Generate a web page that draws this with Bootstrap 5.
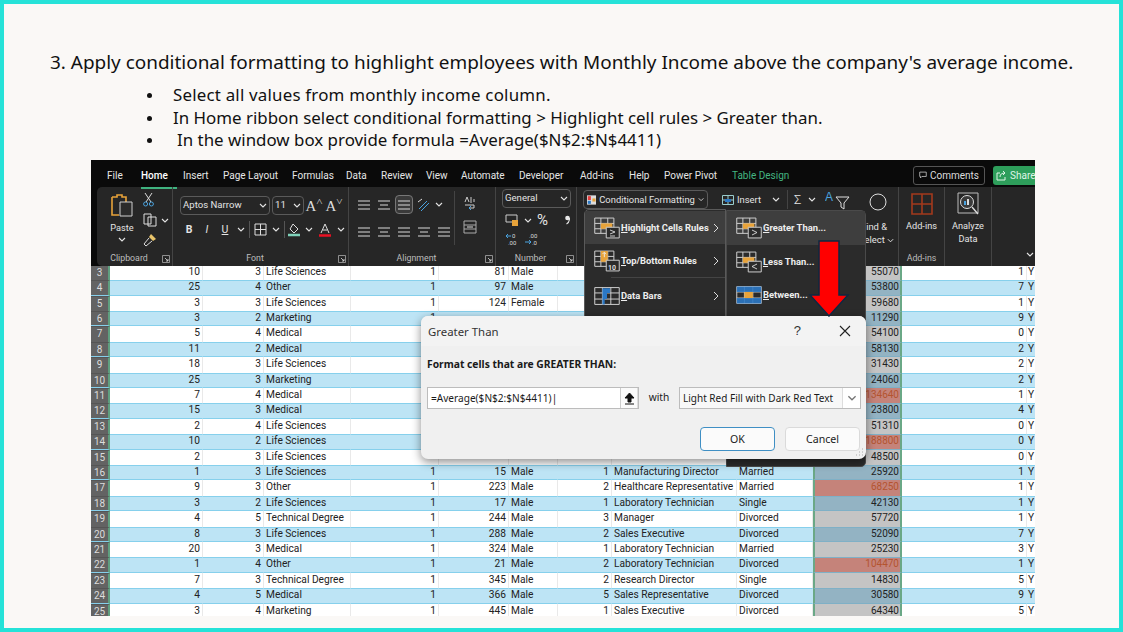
<!DOCTYPE html>
<html lang="en"><head><meta charset="utf-8"><title>Conditional formatting</title>
<link href="https://cdn.jsdelivr.net/npm/bootstrap@5.3.0/dist/css/bootstrap.min.css" rel="stylesheet">
<style>
html,body{height:632px;overflow:hidden;margin:0}
.slide{height:632px;border:4px solid #25e2d8;background:#faf8f6;padding:43px 0 0 46px;color:#111;font-family:"Noto Sans",sans-serif;overflow:hidden}
.slide-title{font-size:18.95px;line-height:30px;margin:0;white-space:nowrap}
.steps{margin:7px 0 0;padding:0 0 0 123px;font-size:16.9px;line-height:22.7px;white-space:nowrap;list-style:none}
.steps li{position:relative}
.steps li::before{content:"";position:absolute;left:-26px;top:9px;width:5px;height:5px;border-radius:50%;background:#111}
.steps .gap1{padding-left:4px}
.steps .wide1{letter-spacing:.2px}
.xl{position:relative;width:944px;height:456px;margin:8px 0 0 41px;overflow:hidden;background:#0a0a0a;font-family:"Liberation Sans Narrow",Roboto,sans-serif;font-size:10px;color:#e8e8e8}
.tabs{height:27px;padding:3px 0 0 16px;gap:0;font-family:Roboto,sans-serif;font-size:10px;color:#e6e6e6}
.tabs>span{position:relative;flex:none}
.t1{width:34px}.t2{width:42px}.t3{width:40px}.t4{width:69px}.t5{width:54px}.t6{width:35px}.t7{width:45px}.t8{width:35px}.t9{width:58px}.t10{width:61px}.t11{width:49px}.t12{width:35px}.t13{width:68px}
.tab-on{font-weight:500;color:#fff}
.tab-on::after{content:"";position:absolute;left:0;right:6px;bottom:-6px;height:2px;background:#3fb27f}
.tab-green{color:#43b581}
.tabs-right{margin-left:auto;gap:8px;margin-right:-6px}
.cmt{height:19px;border:1px solid #555;border-radius:3px;padding:0 5px;gap:3px;color:#ddd;width:72px}
.shr{height:19px;background:#2e9e5b;border-radius:3px;padding:0 3px;gap:3px;color:#dff5e7;width:48px}
.ribbon{height:79px;margin-left:6px;width:950px;background:#262626;border-radius:5px 0 0 5px;color:#e4e4e4;font-family:Roboto,sans-serif;font-size:9.2px}
.rg{position:relative;flex:none;height:79px;border-right:1px solid #444;display:flex;flex-direction:column}
.rg-body{flex:1 1 auto;min-height:0;display:flex}
.rg-label{height:15px;line-height:15px;text-align:center;color:#bdbdbd;font-size:8.8px;position:relative;flex:none}
.lab-l{padding-right:11px}
.launch{position:absolute;right:2px;top:4px}
.g-clip{width:76px}.g-font{width:176px}.g-align{width:147px}.g-num{width:81px}.g-styles{width:322px}.g-add{width:46px}.g-an{width:47px}
.g-end{width:42px;flex:none;padding:0 0 9px 0}
.paste{width:45px;padding:6px 0 0 5px;text-align:center;line-height:11px}
.paste svg{display:block;margin:0 auto 4px}
.cliptools{gap:6px;padding:5px 0 0 1px}
.f-col{padding:9px 0 0 7px;gap:5px}
.ctl{height:19px;border:1px solid #5a5a5a;border-radius:4px;padding:0 2px 0 2px;font-size:9.6px;justify-content:space-between}
.c-font{width:90px}.c-size{width:32px;margin-left:2px}
.gly{color:#ddd;font-family:"Liberation Serif",serif;font-size:15px;line-height:16px;width:20px;text-align:center;flex:none}
.f-row2{gap:0;padding-left:0;height:19px}
.ti{display:flex;justify-content:center;align-items:center;flex:none;font-size:10.5px}
.w18{width:18px}.w14{width:14px}.w16{width:16px}
.sepv{width:1px;height:17px;background:#555;flex:none;margin:0 1px}
.a-col{padding:8px 0 0 6px;gap:8px}
.a-row{gap:2px}
.ibox{width:18px;height:19px;display:flex;align-items:center;justify-content:center;border-radius:4px}
.ibox-on{border:1px solid #777;background:#3a3a3a}
.a-side{margin-left:1px;padding:5px 0 0 8px;border-left:1px solid #444;gap:9px;height:54px;margin-top:4px}
.n-col{padding:2px 0 0 6px;gap:4px}
.c-gen{width:69px}
.n-row{gap:5px;padding-left:3px}
.pct{font-size:15px;line-height:16px}
.cm{margin-left:12px}
.s-row{padding:3px 0 0 6px;font-size:9.4px}
.cf{width:125px;height:19px;border:1px solid #5a5a5a;border-radius:4px;padding:0 3px;gap:3px}
.ins{width:66px;margin-left:14px;gap:3px;height:19px;border-right:1px solid #444}
.sig{width:37px;gap:7px;height:19px;padding-left:6px;font-size:13px;font-weight:300}
.find{margin-left:8px;margin-top:3px;width:30px;text-align:center;line-height:13px;flex:none;white-space:nowrap}
.find svg.lens{display:block;margin:0 0 5px 8px}
.stack{text-align:center;line-height:13px;width:100%;padding-top:5px}
.stack svg{display:block;margin:0 auto 3px}
.sheet{height:350px;overflow:hidden;background:#fff;color:#222;font-size:10.2px}
.sheet-in{margin-top:-1.4px}
.xr{display:grid;grid-template-columns:19px 93px 61px 87px 88px 70px 49px 54px 125px 76px 89px 125px 8px;height:15.41px;line-height:14px}
.xr>span{padding:0 2px;overflow:hidden;white-space:nowrap;border-right:1px solid #e9e9e9;box-sizing:border-box}
.xb>span{background:#bde4f5;border-top:1px solid #86d0ec;border-bottom:1px solid #86d0ec;line-height:12.6px;border-right-color:#bde4f5}
.xr>.rh{background:#636363;color:#ddd;text-align:center;border-right:2px solid #5f9f7f;border-top:1px solid #555;padding:0;line-height:13px;font-size:10px}
.xr>.re{text-align:right}
.xr>.inc{text-align:right;background:#c4c4c4;border-left:2px solid #6aa886;border-right:2px solid #6aa886;font-size:10px;padding-right:1px}
.xb>.inc{background:#93b3c3;border-top-color:#7fb0c6;border-bottom-color:#7fb0c6}
.xr>.hi{background:#c5837a;color:#b4542f}
.xr>.yc{padding-left:1px;border-right:0}
.menu{position:absolute;left:493px;top:49px;width:142px;height:200px;padding-top:1px;background:#2b2b2b;border:1px solid #5a5a5a;border-radius:5px 0 0 0;font-family:Roboto,sans-serif;font-size:9.4px;font-weight:700;color:#eee}
.submenu{position:absolute;left:635px;top:50px;width:140px;height:257px;background:#2b2b2b;border:1px solid #4a4a4a;border-radius:0 5px 5px 0;font-family:Roboto,sans-serif;font-size:9.4px;font-weight:700;color:#eee}
.mi{height:33px;padding-left:9px;gap:1px;position:relative}
.mi svg{flex:none}
.mi-on{background:#3e3e3e}
.mi u{text-underline-offset:1px}
.mi-tall{height:35px}
.submenu .mi-tall{height:34px}
.line-top{border-bottom:1px solid #444;margin-left:26px;height:0}
.mi-arrow{position:absolute;right:6px;top:50%;transform:translateY(-50%)}
.red-arrow{position:absolute;left:717px;top:80px;z-index:5}
.dlg{position:absolute;left:330px;top:156px;width:445px;height:143px;z-index:4;background:#f0f0f0;border:0;border-radius:7px;box-shadow:0 3px 10px rgba(0,0,0,.45);color:#1a1a1a;font-family:"Noto Sans",sans-serif;overflow:hidden}
.dlg-head{height:30px;background:#f3f3f3;padding:0 15px 0 7px;font-size:11.4px;color:#333}
.dlg-q{margin-left:auto;margin-right:38px;font-size:13px;font-family:"Liberation Sans",sans-serif}
.dlg-body{padding:10px 5px 0 6px}
.dlg-lab{font-weight:700;font-size:10.3px;line-height:16px;white-space:nowrap}
.dlg-row{margin-top:15px;gap:0}
.fx{width:212px;height:22px;background:#fff;border:1px solid #bcbcbc;padding:0 0 0 3px;font-size:10.1px;justify-content:space-between}
.fx-btn{width:18px;height:20px;background:#fafafa;border-left:1px solid #ccc;border-right:1px solid #ddd;display:flex;align-items:center;justify-content:center}
.wtxt{width:40px;text-align:center;font-size:10.2px}
.sel{width:182px;height:22px;background:#f8f8f8;border:1px solid #bcbcbc;padding:0 0 0 3px;font-size:10px;justify-content:space-between;white-space:nowrap}
.sel-btn{width:18px;height:20px;background:#fff;border-left:1px solid #ddd;display:flex;align-items:center;justify-content:center}
.dlg-btns{margin-top:18px;gap:10px;padding-right:1px}
.btn.dbtn{width:75px;height:24px;padding:0;font-size:10.6px;line-height:22px;background:#fbfbfb;border:1px solid #dadada;border-radius:4px;color:#1a1a1a;--bs-btn-font-size:10.6px}
.btn.dbtn-ok{border:1px solid #3f8fc4}
.grip{position:absolute;right:2px;bottom:2px}
</style></head><body>
<svg width="0" height="0" class="d-none"><defs>
<symbol id="ic-grid" viewBox="0 0 34 28"><path d="M1 1h25v20H1z" fill="none" stroke="#cfcfcf" stroke-width="1.300"/><path d="M1 8h25M1 15h25M9 1v20M18 1v20" stroke="#cfcfcf" stroke-width="1.300"/><path d="M9 8h15v7H9z" fill="#e8a33a"/><path d="M16 13h17v14H16z" fill="#2b2b2b" stroke="#cfcfcf" stroke-width="1.300"/></symbol>
<symbol id="ic-top" viewBox="0 0 34 28"><path d="M1 1h25v20H1z" fill="none" stroke="#cfcfcf" stroke-width="1.300"/><path d="M1 8h25M1 15h25M9 1v20M18 1v20" stroke="#cfcfcf" stroke-width="1.300"/><path d="M9 1h9v14H9z" fill="#e8a33a"/><path d="M13.500 9V3M11 5l2.500-2.500L16 5" fill="none" stroke="#eee" stroke-width="1.200"/><path d="M16 13h17v14H16z" fill="#2b2b2b" stroke="#cfcfcf" stroke-width="1.300"/></symbol>
<symbol id="ic-bars" viewBox="0 0 34 28"><path d="M1 3h32v22H1z" fill="none" stroke="#cfcfcf" stroke-width="1.300"/><path d="M1 10h32M1 18h32M11 3v22M22 3v22" stroke="#cfcfcf" stroke-width="1.300"/><path d="M11 4h10v6H11zM11 10h6v8h-6zM11 18h3v7h-3z" fill="#2b78c5"/></symbol>
<symbol id="ic-btw" viewBox="0 0 34 28"><path d="M1 3h32v22H1z" fill="none" stroke="#cfcfcf" stroke-width="1.300"/><path d="M1 10h32M1 18h32M11 3v22M22 3v22" stroke="#cfcfcf" stroke-width="1.300"/><path d="M1 3h32v7H1zM1 18h32v7H1z" fill="#2b78c5" opacity=".9"/><path d="M11 10h11v8H11z" fill="#e8a33a"/></symbol>
<symbol id="ic-chev" viewBox="0 0 8 5"><path d="M1 1l3 3 3-3" fill="none" stroke="currentColor" stroke-width="1.100"/></symbol>
<symbol id="ic-lines" viewBox="0 0 14 12"><path d="M1 2h12M1 6h12M1 10h12" stroke="#d8d8d8" stroke-width="1"/></symbol>
<symbol id="ic-linesm" viewBox="0 0 14 12"><path d="M1 2h12M3 6h8M1 10h12" stroke="#d8d8d8" stroke-width="1"/></symbol>
<symbol id="ic-launch" viewBox="0 0 8 8"><path d="M.5.5h7v7h-7z" fill="none" stroke="#aaa" stroke-width=".8"/><path d="M3 3l3 3M6 4v2H4" fill="none" stroke="#ddd" stroke-width=".8"/></symbol>
</defs></svg>
<div class="slide">
<p class="slide-title">3. Apply conditional formatting to highlight employees with Monthly Income above the company's average income.</p>
<ul class="steps">
<li class="wide1">Select all values from monthly income column.</li>
<li>In Home ribbon select conditional formatting &gt; Highlight cell rules &gt; Greater than.</li>
<li class="gap1">In the window box provide formula =Average($N$2:$N$4411)</li>
</ul>
<div class="xl">
<div class="tabs d-flex align-items-center">
<span class="t1">File</span><span class="t2 tab-on">Home</span><span class="t3">Insert</span><span class="t4">Page Layout</span><span class="t5">Formulas</span><span class="t6">Data</span><span class="t7">Review</span><span class="t8">View</span><span class="t9">Automate</span><span class="t10">Developer</span><span class="t11">Add-ins</span><span class="t12">Help</span><span class="t13">Power Pivot</span><span class="tab-green">Table Design</span>
<div class="tabs-right d-flex align-items-center">
<div class="cmt d-flex align-items-center"><svg width="11" height="10" viewBox="0 0 11 10"><path d="M1 1h9v6H4L2 9V7H1z" fill="none" stroke="#ddd"/></svg>Comments</div>
<div class="shr d-flex align-items-center"><svg width="11" height="11" viewBox="0 0 11 11"><path d="M4 3H1v7h8V7M4 7c0-3 2-4 5-4M7 1l2 2-2 2" fill="none" stroke="#dff5e7"/></svg>Share</div>
</div></div>

<div class="ribbon d-flex">
<div class="rg g-clip">
 <div class="rg-body">
  <div class="paste"><svg width="24" height="25" viewBox="0 0 24 25"><path d="M2 4h5V2h5v2h4v5" fill="none" stroke="#e8a33a" stroke-width="1.600"/><path d="M2 4v18h7" fill="none" stroke="#e8a33a" stroke-width="1.600"/><path d="M10 9h12v14H10z" fill="#2b2b2b" stroke="#cfcfcf"/></svg>Paste<svg width="8" height="5" class="mt-1"><use href="#ic-chev"/></svg></div>
  <div class="cliptools d-flex flex-column">
   <svg width="11" height="15" viewBox="0 0 11 15"><path d="M2 1l6 9M9 1L3 10" stroke="#ddd"/><circle cx="2.600" cy="12" r="2" fill="none" stroke="#4aa3df"/><circle cx="8.400" cy="12" r="2" fill="none" stroke="#4aa3df"/></svg>
   <div class="d-flex align-items-center gap-1"><svg width="14" height="14" viewBox="0 0 14 14"><path d="M1 1h7v10H1zM5 4h8v9H5z" fill="#262626" stroke="#ddd"/></svg><svg width="8" height="5"><use href="#ic-chev"/></svg></div>
   <svg width="14" height="14" viewBox="0 0 14 14"><path d="M8 1l5 5-3 2-4-4z" fill="#e8c36a"/><path d="M6 5L1 11l2 2 6-5" fill="none" stroke="#ddd"/></svg>
  </div>
 </div>
 <div class="rg-label lab-l">Clipboard<svg class="launch" width="8" height="8"><use href="#ic-launch"/></svg></div>
</div>
<div class="rg g-font">
 <div class="rg-body">
  <div class="f-col d-flex flex-column">
   <div class="d-flex align-items-center">
    <div class="ctl c-font d-flex align-items-center">Aptos Narrow<svg width="8" height="5"><use href="#ic-chev"/></svg></div>
    <div class="ctl c-size d-flex align-items-center">11<svg width="8" height="5"><use href="#ic-chev"/></svg></div>
    <span class="gly">A<sup>˄</sup></span><span class="gly">A<sup>˅</sup></span>
   </div>
   <div class="f-row2 d-flex align-items-center">
    <span class="ti w18 fw-bold">B</span><span class="ti w18 fst-italic">I</span><span class="ti w18 text-decoration-underline">U</span><span class="ti w14"><svg width="8" height="5"><use href="#ic-chev"/></svg></span><span class="sepv"></span>
    <span class="ti w18"><svg width="13" height="13" viewBox="0 0 13 13"><path d="M1 1h11v11H1zM6.500 1v11M1 6.500h11" fill="none" stroke="#ddd"/></svg></span><span class="ti w14"><svg width="8" height="5"><use href="#ic-chev"/></svg></span><span class="sepv"></span>
    <span class="ti w16"><svg width="14" height="14" viewBox="0 0 14 14"><path d="M6 1l5 5-4 4-4-4z" fill="none" stroke="#ddd"/><path d="M1 12h12" stroke="#7fd1b9" stroke-width="2.500"/></svg></span><span class="ti w14"><svg width="8" height="5"><use href="#ic-chev"/></svg></span>
    <span class="ti w18"><svg width="14" height="14" viewBox="0 0 14 14"><path d="M3 10l4-9 4 9M5 7h4" fill="none" stroke="#ddd"/><path d="M1 12.500h12" stroke="#e81123" stroke-width="2.500"/></svg></span><span class="ti w14"><svg width="8" height="5"><use href="#ic-chev"/></svg></span>
   </div>
  </div>
 </div>
 <div class="rg-label lab-l">Font<svg class="launch" width="8" height="8"><use href="#ic-launch"/></svg></div>
</div>
<div class="rg g-align">
 <div class="rg-body">
  <div class="a-col d-flex flex-column">
   <div class="a-row d-flex align-items-center"><span class="ibox"><svg width="14" height="12"><use href="#ic-lines"/></svg></span><span class="ibox"><svg width="14" height="12"><use href="#ic-linesm"/></svg></span><span class="ibox ibox-on"><svg width="14" height="12"><use href="#ic-lines"/></svg></span><span class="ibox"><svg width="14" height="14" viewBox="0 0 14 14"><path d="M2 11l8-8M4 13l8-8" stroke="#4aa3df"/><path d="M1 4l4-3" stroke="#ddd"/></svg></span><svg width="8" height="5"><use href="#ic-chev"/></svg></div>
   <div class="a-row d-flex align-items-center"><span class="ibox"><svg width="14" height="12"><use href="#ic-lines"/></svg></span><span class="ibox"><svg width="14" height="12"><use href="#ic-linesm"/></svg></span><span class="ibox"><svg width="14" height="12"><use href="#ic-lines"/></svg></span><span class="ibox"><svg width="14" height="12"><use href="#ic-linesm"/></svg></span><span class="ibox"><svg width="14" height="12"><use href="#ic-lines"/></svg></span></div>
  </div>
  <div class="a-side d-flex flex-column">
   <svg width="14" height="15" viewBox="0 0 14 15"><path d="M2 6l2-5 2 5M8 1v6M11 3v3M2 9h9v3H6" fill="none" stroke="#ccc"/><path d="M8 10l-2 2 2 2" fill="none" stroke="#4aa3df"/></svg>
   <svg width="14" height="14" viewBox="0 0 14 14"><path d="M1 1h12v12H1zM1 5h12M1 9h12" fill="none" stroke="#aaa"/><path d="M4 7h6" stroke="#ddd"/></svg>
  </div>
 </div>
 <div class="rg-label lab-l">Alignment<svg class="launch" width="8" height="8"><use href="#ic-launch"/></svg></div>
</div>
<div class="rg g-num">
 <div class="rg-body">
  <div class="n-col d-flex flex-column">
   <div class="ctl c-gen d-flex align-items-center">General<svg width="8" height="5"><use href="#ic-chev"/></svg></div>
   <div class="n-row d-flex align-items-center"><svg width="14" height="13" viewBox="0 0 14 13"><path d="M1 1h11v7H1z" fill="none" stroke="#ccc"/><path d="M7 6h6v6H7z" fill="#e8a33a"/></svg><svg width="8" height="5"><use href="#ic-chev"/></svg><span class="pct">%</span><svg class="cm" width="5" height="10" viewBox="0 0 5 10"><circle cx="2.500" cy="3" r="2.300" fill="#e8e8e8"/><path d="M4.500 3c0 3-1 5-3 6" fill="none" stroke="#e8e8e8" stroke-width="1.200"/></svg></div>
   <div class="n-row d-flex align-items-center"><svg width="14" height="14" viewBox="0 0 14 14"><path d="M6 4H1M3 2L1 4l2 2" fill="none" stroke="#4aa3df"/><text x="7" y="6" font-size="6" fill="#ddd">0</text><text x="3" y="13" font-size="6" fill="#ddd">.00</text></svg><svg width="15" height="14" viewBox="0 0 15 14"><text x="5" y="6" font-size="6" fill="#ddd">.00</text><path d="M1 10h6M5 8l2 2-2 2" fill="none" stroke="#4aa3df"/><text x="8" y="13" font-size="6" fill="#ddd">.0</text></svg></div>
  </div>
 </div>
 <div class="rg-label lab-l">Number<svg class="launch" width="8" height="8"><use href="#ic-launch"/></svg></div>
</div>
<div class="rg g-styles">
 <div class="rg-body">
  <div class="s-row d-flex flex-grow-1 align-items-start">
   <div class="cf d-flex align-items-center text-nowrap"><svg width="12" height="12" viewBox="0 0 12 12"><path d="M0 0h12v12H0z" fill="#ddd"/><path d="M1 1h4v5H1z" fill="#e23b3b"/><path d="M1 7h4v4H1z" fill="#2b78c5"/><path d="M7 4h4v4H7z" fill="#e8a33a"/></svg>Conditional Formatting<svg width="8" height="5"><use href="#ic-chev"/></svg></div>
   <div class="ins d-flex align-items-center"><svg width="12" height="10" viewBox="0 0 12 10"><path d="M.5.5h11v9H.5zM.5 5h11M6 .5v9" fill="none" stroke="#9cc"/><path d="M3 4h6v3H3z" fill="#2b78c5"/></svg>Insert<svg class="ms-2" width="8" height="5"><use href="#ic-chev"/></svg></div>
   <div class="sig d-flex align-items-center">Σ<svg width="8" height="5"><use href="#ic-chev"/></svg></div>
   <svg width="26" height="22" viewBox="0 0 26 22"><text x="0" y="11" font-size="12" fill="#4aa3df" font-family="Liberation Sans">A</text><path d="M11 7h13l-5 6v6l-3-2v-4z" fill="none" stroke="#ddd"/></svg>
   <div class="find"><svg class="lens" width="22" height="22" viewBox="0 0 22 22"><circle cx="11" cy="9" r="8" fill="none" stroke="#ddd"/></svg>Find &amp;<br>Select <svg width="7" height="5"><use href="#ic-chev"/></svg></div>
  </div>
 </div>
 <div class="rg-label"></div>
</div>
<div class="rg g-add">
 <div class="rg-body"><div class="stack"><svg width="22" height="24" viewBox="0 -1 22 24"><path d="M1 1h20v20H1zM11 1v20M1 11h20" fill="none" stroke="#a33a1d" stroke-width="1.600"/></svg>Add-ins</div></div>
 <div class="rg-label">Add-ins</div>
</div>
<div class="rg g-an">
 <div class="rg-body"><div class="stack"><svg width="24" height="24" viewBox="0 0 24 24"><path d="M2 1h20v20H2z" fill="none" stroke="#bbb"/><circle cx="11" cy="10" r="6.500" fill="#3a3a3a" stroke="#ddd"/><path d="M8 9h2v4H8z" fill="#4aa3df"/><path d="M11 7h2v6h-2z" fill="#ddd"/><path d="M16 15l6 7" stroke="#ddd" stroke-width="1.400"/></svg>Analyze<br>Data</div></div>
 <div class="rg-label"></div>
</div>
<div class="g-end d-flex align-items-end justify-content-end"><svg width="8" height="5"><use href="#ic-chev"/></svg></div>
</div>

<div class="sheet"><div class="sheet-in">
<div class="xr"><span class="rh">3</span><span class="re">10</span><span class="re">3</span><span>Life Sciences</span><span class="re">1</span><span class="re">81</span><span>Male</span><span></span><span></span><span></span><span class="inc">55070</span><span class="re">1</span><span class="yc">Y</span></div>
<div class="xr xb"><span class="rh">4</span><span class="re">25</span><span class="re">4</span><span>Other</span><span class="re">1</span><span class="re">97</span><span>Male</span><span></span><span></span><span></span><span class="inc">53800</span><span class="re">7</span><span class="yc">Y</span></div>
<div class="xr"><span class="rh">5</span><span class="re">3</span><span class="re">3</span><span>Life Sciences</span><span class="re">1</span><span class="re">124</span><span>Female</span><span></span><span></span><span></span><span class="inc">59680</span><span class="re">1</span><span class="yc">Y</span></div>
<div class="xr xb"><span class="rh">6</span><span class="re">3</span><span class="re">2</span><span>Marketing</span><span class="re">1</span><span></span><span></span><span></span><span></span><span></span><span class="inc">11290</span><span class="re">9</span><span class="yc">Y</span></div>
<div class="xr"><span class="rh">7</span><span class="re">5</span><span class="re">4</span><span>Medical</span><span></span><span></span><span></span><span></span><span></span><span></span><span class="inc">54100</span><span class="re">0</span><span class="yc">Y</span></div>
<div class="xr xb"><span class="rh">8</span><span class="re">11</span><span class="re">2</span><span>Medical</span><span></span><span></span><span></span><span></span><span></span><span></span><span class="inc">58130</span><span class="re">2</span><span class="yc">Y</span></div>
<div class="xr"><span class="rh">9</span><span class="re">18</span><span class="re">3</span><span>Life Sciences</span><span></span><span></span><span></span><span></span><span></span><span></span><span class="inc">31430</span><span class="re">2</span><span class="yc">Y</span></div>
<div class="xr xb"><span class="rh">10</span><span class="re">25</span><span class="re">3</span><span>Marketing</span><span></span><span></span><span></span><span></span><span></span><span></span><span class="inc">24060</span><span class="re">2</span><span class="yc">Y</span></div>
<div class="xr"><span class="rh">11</span><span class="re">7</span><span class="re">4</span><span>Medical</span><span></span><span></span><span></span><span></span><span></span><span></span><span class="inc hi">134640</span><span class="re">1</span><span class="yc">Y</span></div>
<div class="xr xb"><span class="rh">12</span><span class="re">15</span><span class="re">3</span><span>Medical</span><span></span><span></span><span></span><span></span><span></span><span></span><span class="inc">23800</span><span class="re">4</span><span class="yc">Y</span></div>
<div class="xr"><span class="rh">13</span><span class="re">2</span><span class="re">4</span><span>Life Sciences</span><span></span><span></span><span></span><span></span><span></span><span></span><span class="inc">51310</span><span class="re">0</span><span class="yc">Y</span></div>
<div class="xr xb"><span class="rh">14</span><span class="re">10</span><span class="re">2</span><span>Life Sciences</span><span></span><span></span><span></span><span></span><span></span><span></span><span class="inc hi">188800</span><span class="re">0</span><span class="yc">Y</span></div>
<div class="xr"><span class="rh">15</span><span class="re">2</span><span class="re">3</span><span>Life Sciences</span><span></span><span></span><span></span><span></span><span></span><span></span><span class="inc">48500</span><span class="re">0</span><span class="yc">Y</span></div>
<div class="xr xb"><span class="rh">16</span><span class="re">1</span><span class="re">3</span><span>Life Sciences</span><span class="re">1</span><span class="re">15</span><span>Male</span><span class="re">1</span><span>Manufacturing Director</span><span>Married</span><span class="inc">25920</span><span class="re">1</span><span class="yc">Y</span></div>
<div class="xr"><span class="rh">17</span><span class="re">9</span><span class="re">3</span><span>Other</span><span class="re">1</span><span class="re">223</span><span>Male</span><span class="re">2</span><span>Healthcare Representative</span><span>Married</span><span class="inc hi">68250</span><span class="re">1</span><span class="yc">Y</span></div>
<div class="xr xb"><span class="rh">18</span><span class="re">3</span><span class="re">2</span><span>Life Sciences</span><span class="re">1</span><span class="re">17</span><span>Male</span><span class="re">1</span><span>Laboratory Technician</span><span>Single</span><span class="inc">42130</span><span class="re">1</span><span class="yc">Y</span></div>
<div class="xr"><span class="rh">19</span><span class="re">4</span><span class="re">5</span><span>Technical Degree</span><span class="re">1</span><span class="re">244</span><span>Male</span><span class="re">3</span><span>Manager</span><span>Divorced</span><span class="inc">57720</span><span class="re">1</span><span class="yc">Y</span></div>
<div class="xr xb"><span class="rh">20</span><span class="re">8</span><span class="re">3</span><span>Life Sciences</span><span class="re">1</span><span class="re">288</span><span>Male</span><span class="re">2</span><span>Sales Executive</span><span>Divorced</span><span class="inc">52090</span><span class="re">7</span><span class="yc">Y</span></div>
<div class="xr"><span class="rh">21</span><span class="re">20</span><span class="re">3</span><span>Medical</span><span class="re">1</span><span class="re">324</span><span>Male</span><span class="re">1</span><span>Laboratory Technician</span><span>Married</span><span class="inc">25230</span><span class="re">3</span><span class="yc">Y</span></div>
<div class="xr xb"><span class="rh">22</span><span class="re">1</span><span class="re">4</span><span>Other</span><span class="re">1</span><span class="re">21</span><span>Male</span><span class="re">2</span><span>Laboratory Technician</span><span>Divorced</span><span class="inc hi">104470</span><span class="re">1</span><span class="yc">Y</span></div>
<div class="xr"><span class="rh">23</span><span class="re">7</span><span class="re">3</span><span>Technical Degree</span><span class="re">1</span><span class="re">345</span><span>Male</span><span class="re">2</span><span>Research Director</span><span>Single</span><span class="inc">14830</span><span class="re">5</span><span class="yc">Y</span></div>
<div class="xr xb"><span class="rh">24</span><span class="re">4</span><span class="re">5</span><span>Medical</span><span class="re">1</span><span class="re">366</span><span>Male</span><span class="re">5</span><span>Sales Representative</span><span>Divorced</span><span class="inc">30580</span><span class="re">9</span><span class="yc">Y</span></div>
<div class="xr"><span class="rh">25</span><span class="re">3</span><span class="re">4</span><span>Marketing</span><span class="re">1</span><span class="re">445</span><span>Male</span><span class="re">1</span><span>Sales Executive</span><span>Divorced</span><span class="inc">64340</span><span class="re">5</span><span class="yc">Y</span></div>
</div></div>

<div class="menu">
 <div class="mi mi-on d-flex align-items-center"><svg width="26" height="22"><use href="#ic-grid"/><path d="M16 13l5 2-5 2M16 19h5" fill="none" stroke="#ddd" stroke-width=".9"/></svg><span><u>H</u>ighlight Cells Rules</span><svg class="mi-arrow" width="6" height="10" viewBox="0 0 6 10"><path d="M1 1l4 4-4 4" fill="none" stroke="#ddd"/></svg></div>
 <div class="mi d-flex align-items-center"><svg width="26" height="22"><use href="#ic-top"/><text x="14" y="20" font-size="7" fill="#ddd">10</text></svg><span><u>T</u>op/Bottom Rules</span><svg class="mi-arrow" width="6" height="10" viewBox="0 0 6 10"><path d="M1 1l4 4-4 4" fill="none" stroke="#ddd"/></svg></div>
 <div class="line-top"></div>
 <div class="mi mi-tall d-flex align-items-center"><svg width="26" height="22"><use href="#ic-bars"/></svg><span><u>D</u>ata Bars</span><svg class="mi-arrow" width="6" height="10" viewBox="0 0 6 10"><path d="M1 1l4 4-4 4" fill="none" stroke="#ddd"/></svg></div>
</div>
<div class="submenu">
 <div class="mi mi-tall mi-on d-flex align-items-center"><svg width="26" height="22"><use href="#ic-grid"/><path d="M16 13l5 2.500-5 2.500" fill="none" stroke="#ddd" stroke-width=".9"/></svg><span><u>G</u>reater Than...</span></div>
 <div class="mi d-flex align-items-center"><svg width="26" height="22"><use href="#ic-grid"/><path d="M21 13l-5 2.500 5 2.500" fill="none" stroke="#ddd" stroke-width=".9"/></svg><span><u>L</u>ess Than...</span></div>
 <div class="mi d-flex align-items-center"><svg width="26" height="22"><use href="#ic-btw"/></svg><span><u>B</u>etween...</span></div>
</div>

<svg class="red-arrow" width="42" height="77" viewBox="0 0 42 77"><path d="M11 1h20v54h9L21 76 2 55h9z" fill="#f00" stroke="#0e2841" stroke-width="1.500"/></svg>

<div class="dlg">
 <div class="dlg-head d-flex align-items-center">Greater Than<span class="dlg-q">?</span><svg width="12" height="12" viewBox="0 0 12 12"><path d="M1 1l10 10M11 1L1 11" stroke="#222" stroke-width="1.100"/></svg></div>
 <div class="dlg-body">
  <div class="dlg-lab">Format cells that are GREATER THAN:</div>
  <div class="dlg-row d-flex align-items-center">
   <div class="fx d-flex align-items-center"><span>=Average($N$2:$N$4411)|</span><span class="fx-btn"><svg width="11" height="13" viewBox="0 0 11 13"><path d="M5.500 1L1 6h3v4h3V6h3zM1 12h9" fill="#111" stroke="#111"/></svg></span></div>
   <span class="wtxt">with</span>
   <div class="sel d-flex align-items-center"><span>Light Red Fill with Dark Red Text</span><span class="sel-btn"><svg width="10" height="6" viewBox="0 0 8 5"><use href="#ic-chev" color="#777"/></svg></span></div>
  </div>
  <div class="dlg-btns d-flex justify-content-end">
   <button type="button" class="btn dbtn dbtn-ok">OK</button><button type="button" class="btn dbtn">Cancel</button>
  </div>
 </div>
 <svg class="grip" width="9" height="9" viewBox="0 0 9 9"><path d="M7 1h1M4 4h1M7 4h1M1 7h1M4 7h1M7 7h1" stroke="#aaa"/></svg>
</div>
</div>
</div>
<script src="https://cdn.jsdelivr.net/npm/bootstrap@5.3.0/dist/js/bootstrap.bundle.min.js"></script>
</body></html>
